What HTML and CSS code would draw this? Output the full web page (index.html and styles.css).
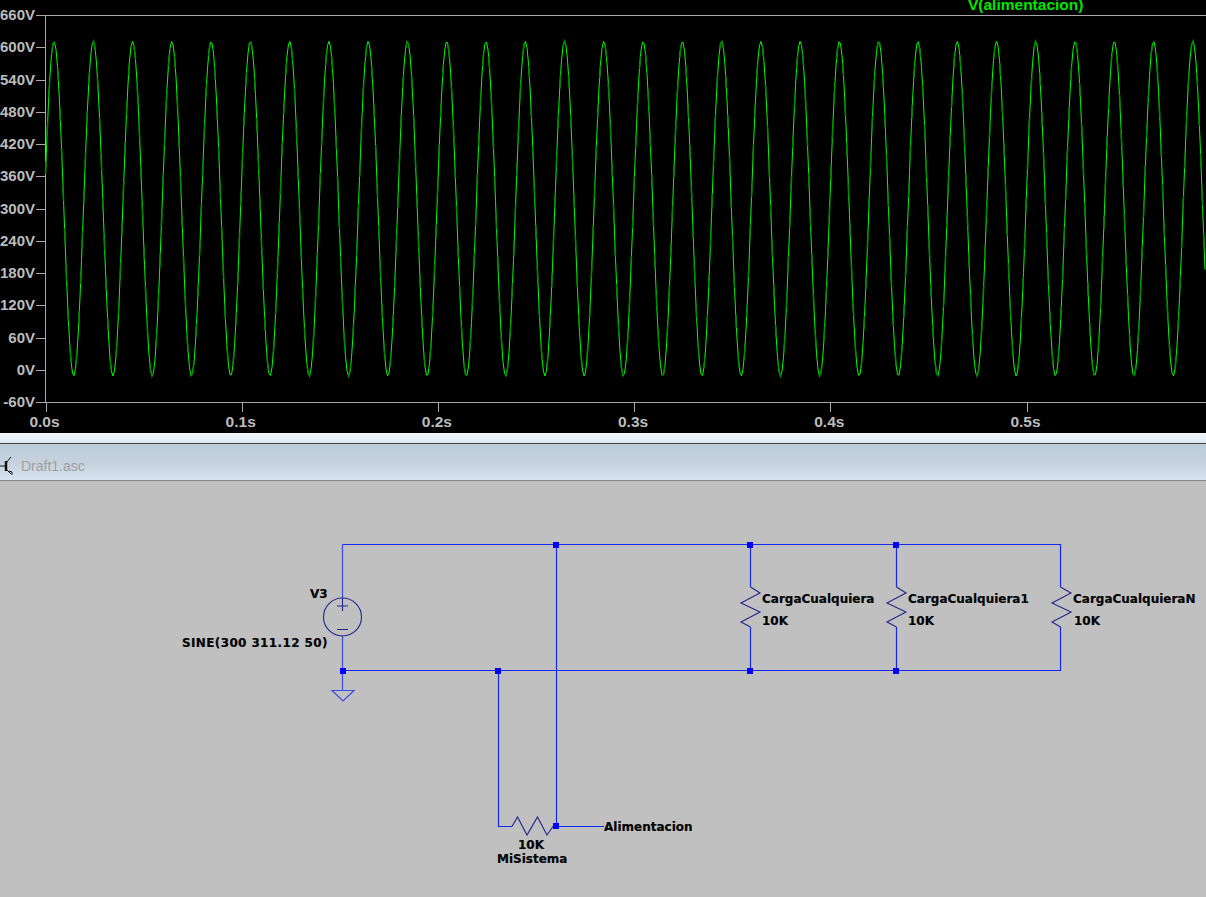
FILE: index.html
```html
<!DOCTYPE html>
<html lang="en">
<head>
  <meta charset="UTF-8">
  <title>Draft1.asc</title>
  <link rel="stylesheet" href="styles.css">
</head>
<body>
  <div class="plot-pane">
    <svg id="plot" class="plot" width="1206" height="433" viewBox="0 0 1206 433">
      <text class="trace-name" x="968" y="10">V(alimentacion)</text>
      <path class="frame" d="M36 15.500H1206M45.500 15V403M36 402.500H1206"/>
      <g id="axes"></g>
      <path id="trace" class="trace" d=""/>
      <path id="traceShade" class="trace-shade" d=""/>
    </svg>
  </div>

  <div class="tab-gap"></div>
  <div class="tab-bar">
    <svg class="tab-icon" width="14" height="20" viewBox="0 0 14 20">
      <path d="M0 10H5"/>
      <path class="tab-icon-bar" d="M6 5V15"/>
      <path d="M6 7L11 1M6 13L11 18M9 15L12 16V19"/>
    </svg>
    <span class="tab-title">Draft1.asc</span>
  </div>

  <div class="schematic-pane">
    <svg class="schematic" width="1206" height="416" viewBox="0 481 1206 416">
      <!-- wires -->
      <path class="wire" d="M342.500 544.500H1060.500V587M1060.500 627V670.500H342.500"/>
      <path class="wire" d="M556.500 544.500V826.500"/>
      <path class="wire" d="M750.500 670.500V627M750.500 587V544.500"/>
      <path class="wire" d="M896.500 670.500V627M896.500 587V544.500"/>
      <path class="wire" d="M498.500 670.500V826.500H512M556 826.500H604"/>
      <path class="wire-soft" d="M342.500 544.500V598M342.500 636V690"/>

      <!-- junctions -->
      <g class="dots">
        <rect x="553" y="542" width="6" height="6"/>
        <rect x="747" y="542" width="6" height="6"/>
        <rect x="893" y="542" width="6" height="6"/>
        <rect x="340" y="668" width="6" height="6"/>
        <rect x="495" y="668" width="6" height="6"/>
        <rect x="747" y="668" width="6" height="6"/>
        <rect x="893" y="668" width="6" height="6"/>
        <rect x="553" y="823" width="6" height="6"/>
      </g>

      <!-- components -->
      <circle class="part" cx="342.500" cy="617" r="19"/>
      <path class="part" d="M337 606H348M342.500 598V611M337 629.500H348"/>
      <path class="wire-soft" d="M332 690.500H354L343 701Z"/>
      <path class="part" d="M750.500 587L760 593L741 603L760 612L741 622L750.500 627"/>
      <path class="part" d="M896.500 587L906 593L887 603L906 612L887 622L896.500 627"/>
      <path class="part" d="M1060.500 587L1071 593L1052 603L1071 612L1052 622L1060.500 627"/>
      <path class="part" d="M512 826.500L517.500 817L527 835L537.500 817L547 835L554 825"/>

      <!-- labels -->
      <text class="label" x="310" y="598">V3</text>
      <text class="label label-wide" x="182" y="647">SINE(300 311.12 50)</text>
      <text class="label" x="762" y="603">CargaCualquiera</text>
      <text class="label" x="762" y="625">10K</text>
      <text class="label" x="908" y="603">CargaCualquiera1</text>
      <text class="label" x="908" y="625">10K</text>
      <text class="label" x="1073" y="603">CargaCualquieraN</text>
      <text class="label" x="1074" y="625">10K</text>
      <text class="label" x="604" y="831">Alimentacion</text>
      <text class="label" x="518" y="849">10K</text>
      <text class="label" x="497" y="863">MiSistema</text>
    </svg>
  </div>

  <script src="plot.js"></script>
</body>
</html>
```
FILE: styles.css
```css
html, body {
  margin: 0;
  padding: 0;
  height: 100%;
  overflow: hidden;
  background-color: #c0c0c0;
}

svg {
  display: block;
}

.plot-pane {
  height: 433px;
  background-color: #000;
}

.frame {
  fill: none;
  stroke: #a8a8a8;
  stroke-width: 1;
  shape-rendering: crispEdges;
}

.tick {
  stroke: #a8a8a8;
  stroke-width: 1;
  shape-rendering: crispEdges;
}

.axis-label {
  font-family: "Liberation Sans", Arial, sans-serif;
  font-size: 15px;
  font-weight: bold;
  fill: #bcbcbc;
}

.time-label {
  font-size: 15.500px;
}

.trace-name {
  font-family: "Liberation Sans", Arial, sans-serif;
  font-size: 15.500px;
  font-weight: bold;
  fill: #00e800;
}

.trace {
  fill: none;
  stroke: #00ff00;
  stroke-width: 1;
}

.trace-shade {
  fill: none;
  stroke: #008a00;
  stroke-width: 1.600;
  stroke-dasharray: 13 27;
}

.tab-gap {
  height: 10px;
  background: linear-gradient(#f4f8fc, #dfe8f2);
}

.tab-bar {
  display: flex;
  align-items: center;
  box-sizing: border-box;
  height: 38px;
  padding-top: 8px;
  border-top: 1px solid #444;
  border-bottom: 1px solid #8a8a8a;
  background: linear-gradient(#bfccd9, #c5d2de 55%, #d8e4f0);
}

.tab-icon {
  fill: none;
  stroke: #111;
  stroke-width: 1;
  flex-shrink: 0;
}

.tab-icon-bar {
  stroke-width: 2.500;
}

.tab-title {
  margin-left: 7px;
  font-family: "Liberation Sans", Arial, sans-serif;
  font-size: 14px;
  color: #a0a0a0;
}

.schematic-pane {
  background-color: #c0c0c0;
}

.wire {
  fill: none;
  stroke: #1428f0;
  stroke-width: 1.200;
}

.wire-soft {
  fill: none;
  stroke: #3a4ce6;
  stroke-width: 1.200;
}

.dots {
  fill: #0000ff;
}

.part {
  fill: none;
  stroke: #24248c;
  stroke-width: 1.100;
}

.label {
  font-family: "DejaVu Sans", Verdana, sans-serif;
  font-size: 12px;
  font-weight: bold;
  fill: #000;
  stroke: #111;
  stroke-width: 0.200;
}

.label-wide {
  letter-spacing: 0.370px;
}
```
FILE: plot.js
```js
// axis ticks and the V(alimentacion) trace
const svgNS = "http://www.w3.org/2000/svg";
const axes = document.getElementById("axes");

function add(tag, attrs, text) {
  const el = document.createElementNS(svgNS, tag);
  for (const key in attrs) el.setAttribute(key, attrs[key]);
  if (text) el.textContent = text;
  axes.appendChild(el);
}

const zeroY = 370;
const pxPerVolt = 32.27 / 60;
const pxPerSecond = 1962;
const originX = 45.5;

for (let v = -60; v <= 660; v += 60) {
  const y = zeroY - v * pxPerVolt;
  add("line", { class: "tick", x1: 36, x2: 45, y1: Math.round(y) + 0.5, y2: Math.round(y) + 0.5 });
  add("text", { class: "axis-label", x: 35, y: y + 5, "text-anchor": "end" }, v + "V");
}

for (let i = 0; i <= 5; i++) {
  const x = originX + i * 0.1 * pxPerSecond;
  add("line", { class: "tick", x1: Math.round(x) + 0.5, x2: Math.round(x) + 0.5, y1: 403, y2: 412 });
  add("text", { class: "axis-label time-label", x: x - 1, y: 427, "text-anchor": "middle" }, "0." + i + "s");
}

// SINE(300 311.12 50)
let d = "";
for (let x = 45.5; x <= 1206; x += 1.5) {
  const t = (x - 44.2) / 1963.5;
  const v = 300 + 311.12 * Math.sin(2 * Math.PI * 50 * t);
  d += (d ? "L" : "M") + x + " " + (zeroY - v * pxPerVolt).toFixed(1);
}
document.getElementById("trace").setAttribute("d", d);
document.getElementById("traceShade").setAttribute("d", d);
```
